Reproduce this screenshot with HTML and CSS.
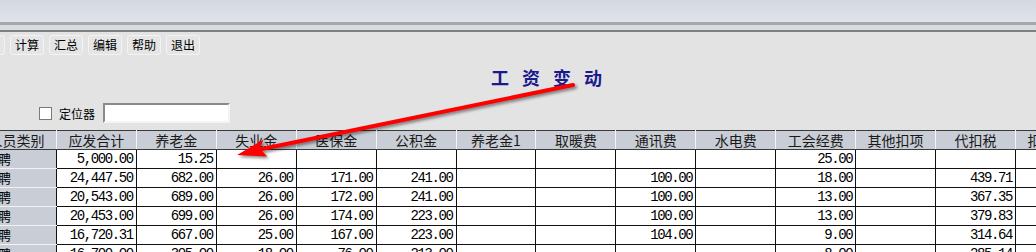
FILE: index.html
```html
<!DOCTYPE html>
<html lang="zh-CN">
<head>
    <meta charset="UTF-8">
    <title>工资变动</title>
    <link rel="stylesheet" href="styles.css">
</head>
<body>

    <div class="titlebar"></div>
    <div class="sep"></div>

    <div class="toolbar">
        <button class="tbtn">保存</button>
        <button class="tbtn">计算</button>
        <button class="tbtn">汇总</button>
        <button class="tbtn">编辑</button>
        <button class="tbtn">帮助</button>
        <button class="tbtn">退出</button>
    </div>

    <h1 class="title">工资变动</h1>

    <div class="locator">
        <span class="check"></span>
        <label for="loc">定位器</label>
        <input type="text" id="loc" class="loc-input">
    </div>

    <div class="grid-wrap">
        <table class="grid">
            <thead>
                <tr>
                    <th>人员类别</th>
                    <th>应发合计</th>
                    <th>养老金</th>
                    <th>失业金</th>
                    <th>医保金</th>
                    <th>公积金</th>
                    <th>养老金1</th>
                    <th>取暖费</th>
                    <th>通讯费</th>
                    <th>水电费</th>
                    <th>工会经费</th>
                    <th>其他扣项</th>
                    <th>代扣税</th>
                    <th>扣款合计</th>
                </tr>
            </thead>
            <tbody>
                <tr>
                    <td class="kind">返聘</td>
                    <td>5,000.00</td><td>15.25</td><td></td><td></td><td></td><td></td><td></td><td></td><td></td><td>25.00</td><td></td><td></td><td></td>
                </tr>
                <tr>
                    <td class="kind">返聘</td>
                    <td>24,447.50</td><td>682.00</td><td>26.00</td><td>171.00</td><td>241.00</td><td></td><td></td><td>100.00</td><td></td><td>18.00</td><td></td><td>439.71</td><td></td>
                </tr>
                <tr>
                    <td class="kind">返聘</td>
                    <td>20,543.00</td><td>689.00</td><td>26.00</td><td>172.00</td><td>241.00</td><td></td><td></td><td>100.00</td><td></td><td>13.00</td><td></td><td>367.35</td><td></td>
                </tr>
                <tr>
                    <td class="kind">返聘</td>
                    <td>20,453.00</td><td>699.00</td><td>26.00</td><td>174.00</td><td>223.00</td><td></td><td></td><td>100.00</td><td></td><td>13.00</td><td></td><td>379.83</td><td></td>
                </tr>
                <tr>
                    <td class="kind">返聘</td>
                    <td>16,720.31</td><td>667.00</td><td>25.00</td><td>167.00</td><td>223.00</td><td></td><td></td><td>104.00</td><td></td><td>9.00</td><td></td><td>314.64</td><td></td>
                </tr>
                <tr>
                    <td class="kind">返聘</td>
                    <td>16,700.00</td><td>305.00</td><td>18.00</td><td>76.00</td><td>213.00</td><td></td><td></td><td></td><td></td><td>8.00</td><td></td><td>285.14</td><td></td>
                </tr>
            </tbody>
        </table>
    </div>

    <!-- annotation arrow drawn over the screenshot -->
    <svg class="arrow" width="1036" height="252" viewBox="0 0 1036 252">
        <line x1="573" y1="85" x2="262" y2="149" stroke="#ff0000" stroke-width="4" stroke-linecap="round"/>
        <polygon points="237,155 263.5,139.5 260,148.5 267,156.5" fill="#ff0000"/>
    </svg>

</body>
</html>
```

FILE: styles.css
```css
body {
    margin: 0;
    background: #e3e3e3;
    font-family: "Noto Sans CJK SC", sans-serif;
    font-size: 12px;
    color: #000;
    overflow: hidden;
    width: 1036px;
    height: 252px;
    position: relative;
}

.titlebar {
    height: 22px;
    background: linear-gradient(#d4d8e1, #e0e3ea);
}

.sep {
    height: 5px;
    background: #dadbdd;
    border-top: 3px solid #a5a8ac;
    border-bottom: 2px solid #7e8084;
}

.toolbar {
    display: flex;
    gap: 5px;
    margin-top: 3px;
    margin-left: -29px;
}

.tbtn {
    width: 34px;
    height: 20px;
    padding: 0;
    background: #e5e5e5;
    border: 1px solid #f3f3f3;
    border-radius: 3px;
    font-family: "Noto Sans CJK SC", sans-serif;
    font-size: 12px;
    line-height: 18px;
    color: #000;
}

.title {
    margin: 11px 0 0 491px;
    font-size: 18px;
    line-height: 22px;
    font-weight: bold;
    letter-spacing: 13px;
    color: #1a1a8c;
}

.locator {
    display: flex;
    align-items: center;
    margin: 15px 0 0 39px;
    height: 20px;
}

.check {
    width: 11px;
    height: 11px;
    background: #fff;
    border: 1px solid #7a7a7a;
    margin-right: 7px;
}

.locator label {
    font-size: 12px;
    margin-right: 8px;
}

.loc-input {
    width: 123px;
    height: 16px;
    padding: 0;
    border: 2px solid;
    border-color: #8a8a8a #f4f4f4 #f4f4f4 #8a8a8a;
    background: #fff;
}

.grid-wrap {
    margin-top: 7px;
    margin-left: -24px;
}

.grid {
    border-collapse: collapse;
    table-layout: fixed;
    width: 1120px;
}

.grid th {
    height: 18px;
    padding: 0;
    background: #c9cdd5;
    border: 1px solid #3a3a3a;
    border-right-color: #f4f4f4;
    font-weight: normal;
    font-size: 14px;
    line-height: 18px;
    color: #1a1a1a;
    text-align: center;
    white-space: nowrap;
    overflow: hidden;
}

.grid td {
    height: 18px;
    padding: 0 3px 0 0;
    background: #fff;
    border: 1px solid #111;
    font-family: "Liberation Mono", monospace;
    font-size: 14px;
    letter-spacing: -1.4px;
    line-height: 18px;
    text-align: right;
    white-space: nowrap;
    overflow: hidden;
}

.grid td.kind {
    background: #c9cdd5;
    border-color: #f2f2f2 #111 #f2f2f2 #c9cdd5;
    font-family: "Noto Sans CJK SC", sans-serif;
    font-size: 13px;
    letter-spacing: 0;
    text-align: left;
    padding-left: 8px;
}

.arrow {
    position: absolute;
    top: 0;
    left: 0;
    pointer-events: none;
    filter: drop-shadow(2px 2px 1.5px rgba(0, 0, 0, 0.45));
}
```
